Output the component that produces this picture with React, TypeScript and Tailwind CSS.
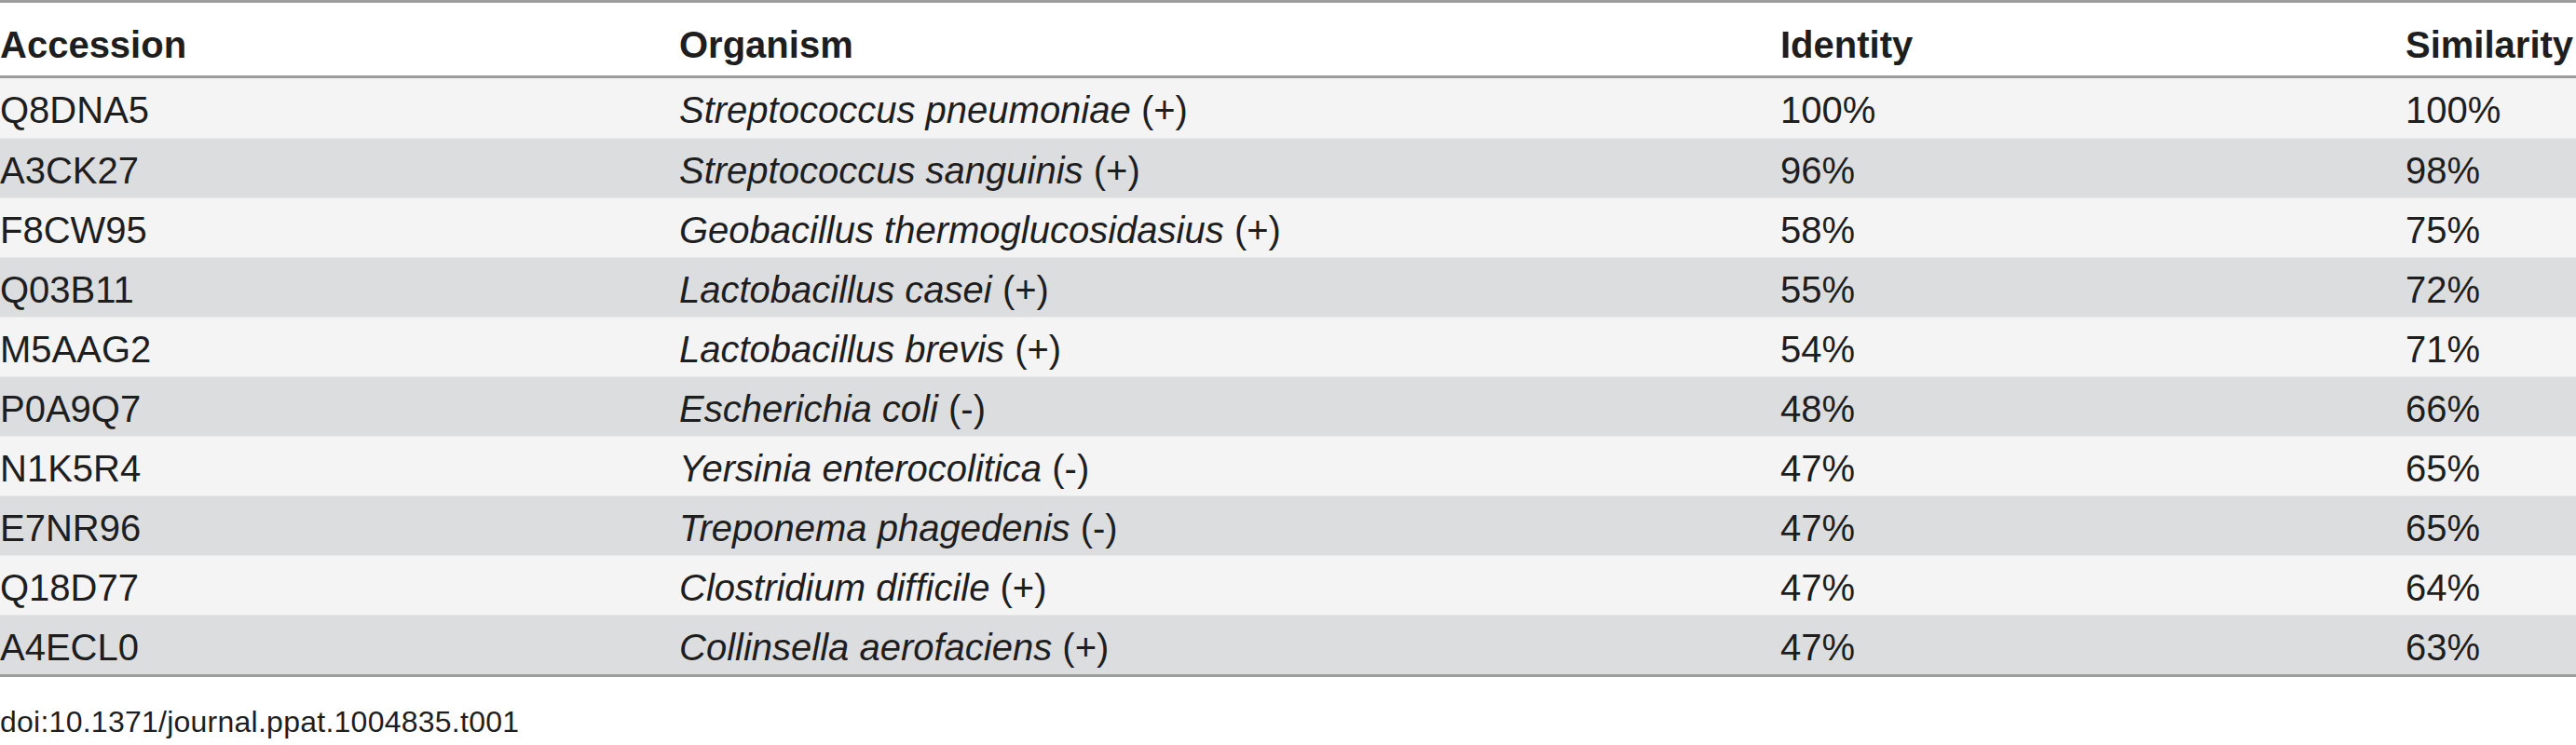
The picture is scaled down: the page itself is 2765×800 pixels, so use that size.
type Row = {
  accession: string;
  genus: string;
  gram: string;
  identity: string;
  similarity: string;
};

const rows: Row[] = [
  { accession: "Q8DNA5", genus: "Streptococcus pneumoniae", gram: "(+)", identity: "100%", similarity: "100%" },
  { accession: "A3CK27", genus: "Streptococcus sanguinis", gram: "(+)", identity: "96%", similarity: "98%" },
  { accession: "F8CW95", genus: "Geobacillus thermoglucosidasius", gram: "(+)", identity: "58%", similarity: "75%" },
  { accession: "Q03B11", genus: "Lactobacillus casei", gram: "(+)", identity: "55%", similarity: "72%" },
  { accession: "M5AAG2", genus: "Lactobacillus brevis", gram: "(+)", identity: "54%", similarity: "71%" },
  { accession: "P0A9Q7", genus: "Escherichia coli", gram: "(-)", identity: "48%", similarity: "66%" },
  { accession: "N1K5R4", genus: "Yersinia enterocolitica", gram: "(-)", identity: "47%", similarity: "65%" },
  { accession: "E7NR96", genus: "Treponema phagedenis", gram: "(-)", identity: "47%", similarity: "65%" },
  { accession: "Q18D77", genus: "Clostridium difficile", gram: "(+)", identity: "47%", similarity: "64%" },
  { accession: "A4ECL0", genus: "Collinsella aerofaciens", gram: "(+)", identity: "47%", similarity: "63%" },
];

const cols = "grid grid-cols-[729px_1182px_671px_1fr]";

export default function App() {
  return (
    <div className="w-[2765px] h-[800px] bg-white text-[#1e1e1e] font-['Liberation_Sans',Arial,sans-serif] overflow-hidden">
      <div className="border-t-[3px] border-b-[3px] border-[#9c9c9c]">
        <div className={`${cols} h-[81px] pt-[25px] text-[40px] leading-[40px] font-bold border-b-[3px] border-[#9c9c9c]`}>
          <div>Accession</div>
          <div>Organism</div>
          <div>Identity</div>
          <div className="whitespace-nowrap">Similarity</div>
        </div>
        {rows.map((r, i) => (
          <div
            key={r.accession}
            className={`${cols} h-[64px] pt-[14px] text-[40px] leading-[40px] whitespace-nowrap ${
              i % 2 === 0 ? "bg-[#f4f4f4]" : "bg-[#dcdddf]"
            } ${i > 0 ? "border-t border-[#e9e9ea]" : ""}`}
          >
            <div>{r.accession}</div>
            <div>
              <span className="italic">{r.genus}</span> {r.gram}
            </div>
            <div>{r.identity}</div>
            <div>{r.similarity}</div>
          </div>
        ))}
      </div>
      <div className="mt-[32px] text-[32px] leading-[32px] tracking-[0.25px]">
        doi:10.1371/journal.ppat.1004835.t001
      </div>
    </div>
  );
}
